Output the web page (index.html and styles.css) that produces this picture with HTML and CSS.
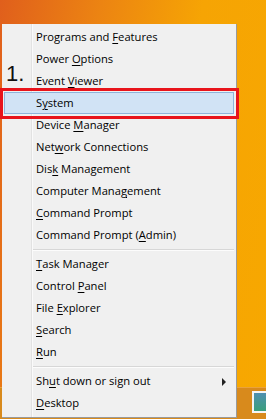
FILE: index.html
```html
<!DOCTYPE html>
<html lang="en">
<head>
  <meta charset="UTF-8" />
  <title>Quick Link Menu</title>
  <link rel="stylesheet" href="styles.css">
</head>
<body>

  <!-- Taskbar strip behind the menu -->
  <div class="taskbar">
    <div class="task-icon"></div>
  </div>

  <!-- Win+X menu -->
  <div class="menu">
    <span class="step">1.</span>
    <div class="box-mark"></div>

    <div class="item">Programs and <u>F</u>eatures</div>
    <div class="item">Power <u>O</u>ptions</div>
    <div class="item">Event <u>V</u>iewer</div>
    <div class="item selected">S<u>y</u>stem</div>
    <div class="item">Device <u>M</u>anager</div>
    <div class="item">Net<u>w</u>ork Connections</div>
    <div class="item">Dis<u>k</u> Management</div>
    <div class="item">Computer Mana<u>g</u>ement</div>
    <div class="item"><u>C</u>ommand Prompt</div>
    <div class="item">Command Prompt (<u>A</u>dmin)</div>
    <div class="sep"></div>
    <div class="item"><u>T</u>ask Manager</div>
    <div class="item">Control <u>P</u>anel</div>
    <div class="item">File <u>E</u>xplorer</div>
    <div class="item"><u>S</u>earch</div>
    <div class="item"><u>R</u>un</div>
    <div class="sep"></div>
    <div class="item has-sub">Sh<u>u</u>t down or sign out <span class="arrow"></span></div>
    <div class="item"><u>D</u>esktop</div>
  </div>

</body>
</html>
```

FILE: styles.css
```css
/* Desktop background */
body {
  margin: 0;
  width: 266px;
  height: 419px;
  overflow: hidden;
  position: relative;
  background: linear-gradient(100deg, #e05f1c 0%, #ec8412 30%, #f6a404 60%, #f7a800 100%);
  font-family: 'Open Sans', 'Noto Sans', sans-serif;
}

.taskbar {
  position: absolute;
  left: 0;
  right: 0;
  top: 387px;
  bottom: 0;
  background: #d88a1c;
  border-top: 1px solid #e9a23c;
}

.task-icon {
  position: absolute;
  left: 252px;
  top: 3px;
  width: 16px;
  height: 18px;
  border: 2px solid #f4f4f4;
  background: linear-gradient(180deg, #4f8fb0, #3aa07c);
}

/* Menu */
.menu {
  position: relative;
  margin: 24px 0 0 2px;
  width: 234px;
  height: 390px;
  padding: 2px 0 1px;
  background: #f0f0f0;
  border-right: 1px solid #9a9a9a;
  border-bottom: 1px solid #9a9a9a;
}

/* icon gutter line */
.menu::before {
  content: "";
  position: absolute;
  left: 29px;
  top: 0;
  bottom: 0;
  width: 1px;
  background: #e2e2e2;
  border-right: 1px solid #fafafa;
}

.item {
  position: relative;
  height: 22px;
  line-height: 22px;
  padding-left: 34px;
  font-size: 11.2px;
  color: #000;
  white-space: nowrap;
}

.item u {
  text-underline-offset: 2px;
}

.item.selected {
  margin: 0 2px;
  padding-left: 31px;
  height: 20px;
  line-height: 20px;
  background: #d1e3f5;
  border: 1px solid #8fb3da;
}

.sep {
  height: 7px;
  margin-left: 31px;
  margin-right: 2px;
  background: linear-gradient(#f0f0f0 3px, #d7d7d7 3px, #d7d7d7 4px, #fcfcfc 4px, #fcfcfc 5px, #f0f0f0 5px);
}

.arrow {
  position: absolute;
  left: 220px;
  top: 8px;
  width: 0;
  height: 0;
  border-top: 4px solid transparent;
  border-bottom: 4px solid transparent;
  border-left: 4px solid #222;
}

/* annotation */
.step {
  position: absolute;
  left: 4px;
  top: 38px;
  font-family: 'Liberation Sans', sans-serif;
  font-size: 22px;
  line-height: 24px;
  color: #111;
}

.box-mark {
  position: absolute;
  left: -2px;
  top: 64px;
  width: 233px;
  height: 25px;
  border: 3px solid #e8141b;
  z-index: 1;
}
```
